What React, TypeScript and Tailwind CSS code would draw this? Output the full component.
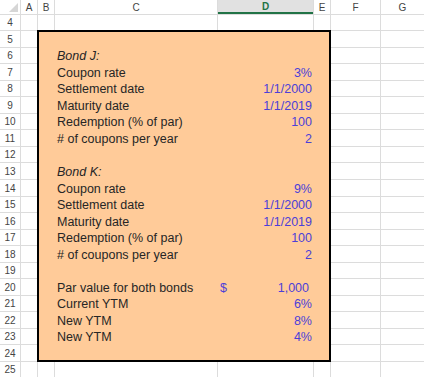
const font = { fontFamily: '"Liberation Sans", Arial, sans-serif' };

type Row = {
  h: string;
  label?: string;
  value?: string;
  italic?: boolean;
  dollar?: boolean;
};

// heights follow the sheet's row lines so the box rows line up with A / F / G
const boxRows: Row[] = [
  { h: "h-[16px]" },
  { h: "h-[16px]", label: "Bond J:", italic: true },
  { h: "h-[17px]", label: "Coupon rate", value: "3%" },
  { h: "h-[16px]", label: "Settlement date", value: "1/1/2000" },
  { h: "h-[17px]", label: "Maturity date", value: "1/1/2019" },
  { h: "h-[16px]", label: "Redemption (% of par)", value: "100" },
  { h: "h-[17px]", label: "# of coupons per year", value: "2" },
  { h: "h-[16px]" },
  { h: "h-[17px]", label: "Bond K:", italic: true },
  { h: "h-[17px]", label: "Coupon rate", value: "9%" },
  { h: "h-[16px]", label: "Settlement date", value: "1/1/2000" },
  { h: "h-[17px]", label: "Maturity date", value: "1/1/2019" },
  { h: "h-[16px]", label: "Redemption (% of par)", value: "100" },
  { h: "h-[17px]", label: "# of coupons per year", value: "2" },
  { h: "h-[16px]" },
  { h: "h-[17px]", label: "Par value for both bonds", value: "1,000", dollar: true },
  { h: "h-[16px]", label: "Current YTM", value: "6%" },
  { h: "h-[17px]", label: "New YTM", value: "8%" },
  { h: "h-[16px]", label: "New YTM", value: "4%" },
  { h: "h-[15px]" },
];

const letters = ["A", "B", "C", "D", "E", "F", "G"];

function RowNum({ n }: { n: number }) {
  return (
    <div className="flex items-center justify-center bg-white text-[10px] text-[#444]">
      {n}
    </div>
  );
}

function Cell() {
  return <div className="bg-white" />;
}

function BondBox() {
  return (
    <div className="col-start-3 col-end-7 row-start-3 row-end-23 -m-px flex flex-col border-2 border-black bg-[#ffcb99] text-[12.5px] leading-[14px]">
      {boxRows.map((r, i) => (
        <div key={i} className={`grid grid-cols-[16px_163px_96px_1fr] items-end ${r.h}`}>
          <div />
          <div className={`pb-px pl-[2px] text-[#262626] ${r.italic ? "italic" : ""}`}>
            {r.label}
          </div>
          {r.dollar ? (
            <div className="flex justify-between pb-px pl-[2px] pr-[5px] text-[#4c3fd8]">
              <span>$</span>
              <span>{r.value}</span>
            </div>
          ) : (
            <div className="pb-px pr-[2px] text-right text-[#4c3fd8]">{r.value}</div>
          )}
          <div />
        </div>
      ))}
    </div>
  );
}

export default function App() {
  const rows = Array.from({ length: 22 }, (_, i) => i + 4);
  return (
    <div
      style={font}
      className="grid h-[377px] w-[424px] grid-cols-[20px_16px_16px_162px_95px_16px_49px_1fr] grid-rows-[14px_15px_16px_15px_16px_15px_16px_15px_16px_15px_16px_16px_15px_16px_15px_16px_15px_16px_15px_16px_15px_16px_15px] gap-px overflow-hidden bg-[#dcdcdc]"
    >
      <div className="relative bg-white">
        <svg className="absolute bottom-[2px] right-[2px]" width="9" height="9" viewBox="0 0 9 9">
          <path d="M9 0 L9 9 L0 9 Z" fill="#d6d6d6" />
        </svg>
      </div>
      {letters.map((l) =>
        l === "D" ? (
          <div
            key={l}
            className="flex items-center justify-center border-b-2 border-[#217346] bg-[#e1e1e1] text-[10px] font-bold text-[#217346]"
          >
            {l}
          </div>
        ) : (
          <div key={l} className="flex items-center justify-center bg-white text-[10px] text-[#444]">
            {l}
          </div>
        )
      )}
      <BondBox />
      {rows.map((n) =>
        n >= 5 && n <= 24 ? (
          [<RowNum key={`n${n}`} n={n} />, <Cell key={`a${n}`} />, <Cell key={`f${n}`} />, <Cell key={`g${n}`} />]
        ) : (
          [
            <RowNum key={`n${n}`} n={n} />,
            ...letters.map((l) => <Cell key={`${l}${n}`} />),
          ]
        )
      )}
    </div>
  );
}
